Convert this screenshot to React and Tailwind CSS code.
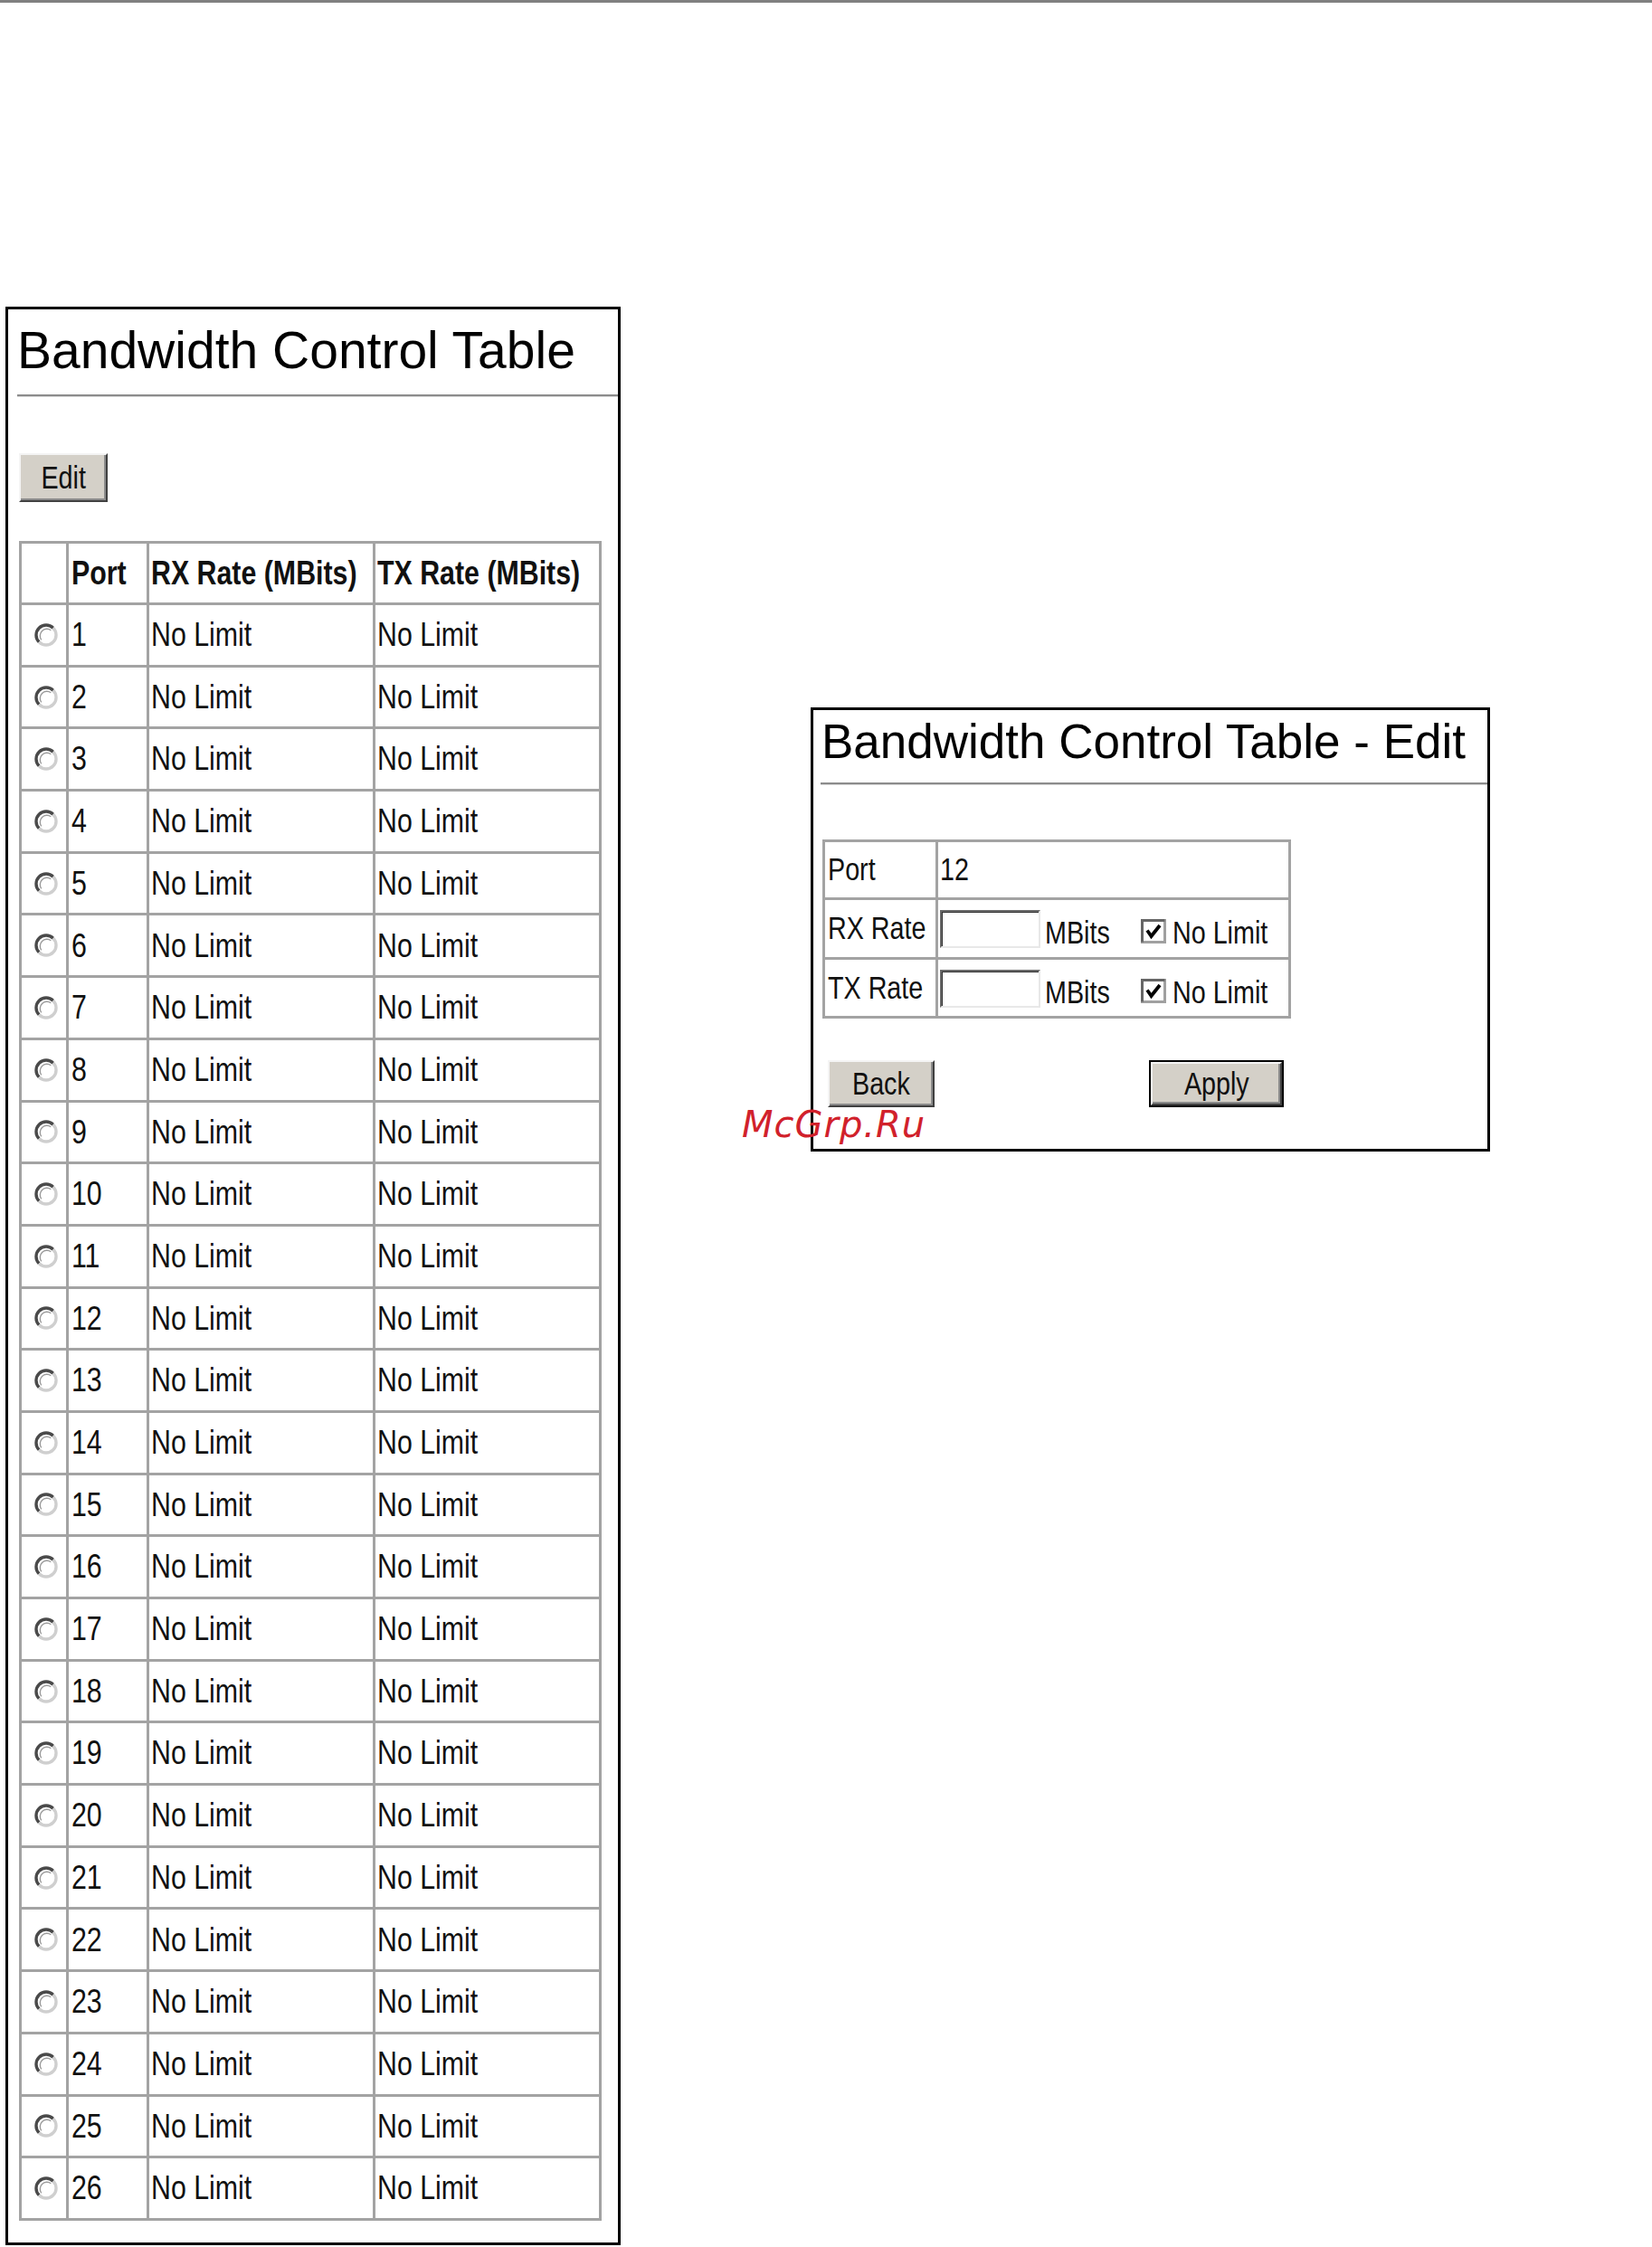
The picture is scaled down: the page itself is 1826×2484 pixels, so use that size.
import React from "react";

const ports = Array.from({ length: 26 }, (_, i) => i + 1);

const sans = "font-['Liberation_Sans',Arial,sans-serif]";

// the screenshot text is a narrow sans; squeeze Arial metrics to match
const N = ({ children, center }) => (
  <span
    className={`inline-block whitespace-nowrap scale-x-[0.82] ${center ? "origin-center" : "origin-left"}`}
  >
    {children}
  </span>
);

// classic win32 radio button
const Radio = () => (
  <svg width="28" height="28" viewBox="0 0 28 28">
    <circle cx="14" cy="14" r="11" fill="#ffffff" />
    <path d="M21.8 6.2 A11 11 0 0 0 6.2 21.8" fill="none" stroke="#4a4a4a" strokeWidth="3.4" />
    <path d="M6.2 21.8 A11 11 0 0 0 21.8 6.2" fill="none" stroke="#cfcfcf" strokeWidth="3.4" />
    <path d="M19.3 8.7 A7.6 7.6 0 0 0 8.7 19.3" fill="none" stroke="#9a9a9a" strokeWidth="1.4" />
  </svg>
);

const Check = () => (
  <svg width="28" height="27" viewBox="0 0 28 27">
    <rect x="1.5" y="1.5" width="25" height="24" fill="#ffffff" stroke="#a0a0a0" strokeWidth="3" />
    <path d="M1.5 25.5 V1.5 H26.5" fill="none" stroke="#666" strokeWidth="3" />
    <path d="M7 12.5 L11.5 19 L21 7" fill="none" stroke="#000" strokeWidth="3.8" />
  </svg>
);

const btn =
  "bg-[#d4d0c8] border-2 border-t-[#f4f4f4] border-l-[#f4f4f4] border-r-[#404040] border-b-[#404040] shadow-[inset_-2px_-2px_0_#8a8a8a] text-[35px] text-[#111] flex items-center justify-center " +
  sans;

const cell = "border-r-[3px] border-b-[3px] border-[#a3a3a3] flex items-center overflow-hidden";

export default function App() {
  return (
    <div className="w-[1826px] h-[2484px] bg-white relative overflow-hidden">
      <div className="h-[3px] bg-[#808080]" />

      <div className="flex items-start pt-[336px]">
        {/* list view */}
        <div className="ml-[6px] w-[680px] h-[2143px] border-[3px] border-black flex flex-col">
          <h1 className={`pl-[10px] pt-[13px] text-[57px] leading-[64px] text-black ${sans}`}>
            Bandwidth Control Table
          </h1>
          <div className="mt-[17px] ml-[10px] border-t-2 border-t-[#8c8c8c] border-b border-b-[#d6d6d6]" />
          <button className={`mt-[62px] ml-[12px] w-[98px] h-[54px] ${btn}`}>
            <N center>Edit</N>
          </button>

          <div
            className={`mt-[43px] ml-[12px] w-[644px] grid grid-cols-[52px_89px_250px_250px] grid-rows-[68px_repeat(26,68.7px)] border-l-[3px] border-t-[3px] border-[#a3a3a3] text-[37px] text-[#111] ${sans}`}
          >
            <div className={cell} />
            <div className={`${cell} pl-[3px] font-bold`}><N>Port</N></div>
            <div className={`${cell} pl-[2px] font-bold`}><N>RX Rate (MBits)</N></div>
            <div className={`${cell} pl-[2px] font-bold`}><N>TX Rate (MBits)</N></div>
            {ports.map((p) => (
              <React.Fragment key={p}>
                <div className={`${cell} justify-center pl-[4px]`}>
                  <Radio />
                </div>
                <div className={`${cell} pl-[3px]`}><N>{p}</N></div>
                <div className={`${cell} pl-[2px]`}><N>No Limit</N></div>
                <div className={`${cell} pl-[2px]`}><N>No Limit</N></div>
              </React.Fragment>
            ))}
          </div>
        </div>

        {/* edit view */}
        <div className="relative ml-[210px] mt-[443px] w-[751px] h-[491px] border-[3px] border-black flex flex-col">
          <h2 className={`pl-[9px] pt-[4px] text-[53px] leading-[62px] text-black whitespace-nowrap ${sans}`}>
            Bandwidth Control Table - Edit
          </h2>
          <div className="mt-[14px] ml-[8px] border-t-2 border-t-[#8c8c8c] border-b border-b-[#d6d6d6]" />

          <div
            className={`mt-[60px] ml-[10px] w-[518px] grid grid-cols-[125px_390px] grid-rows-[64px_66px_65px] border-l-[3px] border-t-[3px] border-[#a3a3a3] text-[35px] text-[#111] ${sans}`}
          >
            <div className={`${cell} pl-[3px]`}><N>Port</N></div>
            <div className={`${cell} pl-[2px]`}><N>12</N></div>

            <div className={`${cell} pl-[3px]`}><N>RX Rate</N></div>
            <div className={`${cell} !items-end pb-[10px] pl-[2px]`}>
              <div className="shrink-0 w-[111px] h-[42px] bg-white border-2 border-t-[#6a6a6a] border-l-[#6a6a6a] border-r-[#e8e8e8] border-b-[#e8e8e8] shadow-[inset_1px_1px_0_#303030]" />
              <span className="ml-[5px] w-[106px] shrink-0 leading-none"><N>MBits</N></span>
              <span className="mb-[5px] flex shrink-0"><Check /></span>
              <span className="ml-[7px] leading-none"><N>No Limit</N></span>
            </div>

            <div className={`${cell} pl-[3px]`}><N>TX Rate</N></div>
            <div className={`${cell} !items-end pb-[9px] pl-[2px]`}>
              <div className="shrink-0 w-[111px] h-[42px] bg-white border-2 border-t-[#6a6a6a] border-l-[#6a6a6a] border-r-[#e8e8e8] border-b-[#e8e8e8] shadow-[inset_1px_1px_0_#303030]" />
              <span className="ml-[5px] w-[106px] shrink-0 leading-none"><N>MBits</N></span>
              <span className="mb-[5px] flex shrink-0"><Check /></span>
              <span className="ml-[7px] leading-none"><N>No Limit</N></span>
            </div>
          </div>

          <div className="mt-[46px] ml-[16px] flex items-center">
            <button className={`w-[118px] h-[52px] ${btn}`}><N center>Back</N></button>
            <div className="ml-[237px] w-[149px] h-[52px] border-2 border-black flex">
              <button className={`flex-1 ${btn}`}><N center>Apply</N></button>
            </div>
          </div>

          {/* watermark */}
          <div className="absolute left-[-79px] top-[438px] text-[40px] leading-none italic text-[#d1212b] font-['DejaVu_Sans',sans-serif] tracking-[1px] whitespace-nowrap">
            McGrp.Ru
          </div>
        </div>
      </div>
    </div>
  );
}
